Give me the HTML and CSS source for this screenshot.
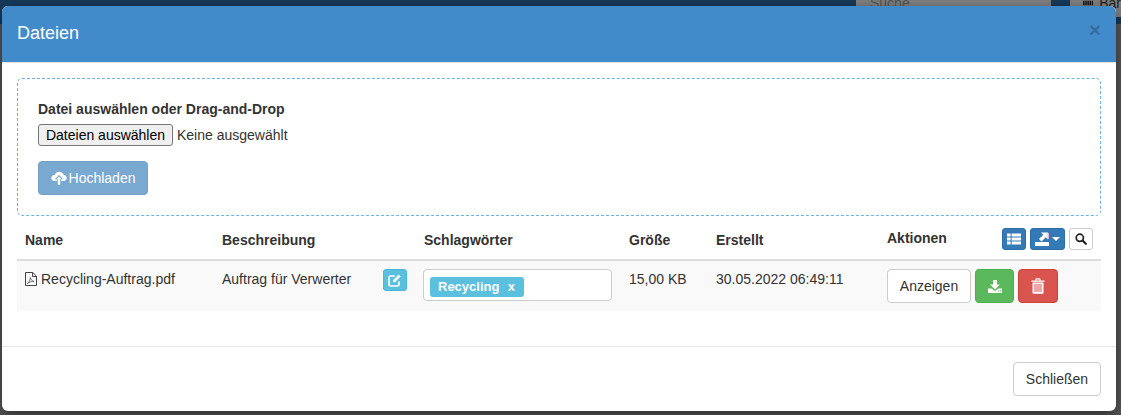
FILE: index.html
```html
<!DOCTYPE html>
<html lang="de">
<head>
<meta charset="utf-8">
<title>Dateien</title>
<link rel="stylesheet" href="styles.css">
</head>
<body>
<div class="backdrop-nav">
  <div class="nav-search">Suche...</div>
  <div class="nav-button">
    <svg class="nav-bars" viewBox="0 0 14 6" width="14" height="6"><path fill="#111" d="M0 0h2v6H0zM3 0h2v6H3zM6 0h2v6H6zM9 0h2v6H9zM12 0h2v6h-2z"/></svg><span class="nav-label">Bar</span>
  </div>
</div>
<div class="modal">
  <header class="modal-header">
    <h4 class="modal-title">Dateien</h4>
    <span class="close">×</span>
  </header>
  <main class="modal-body">
    <section class="dropzone">
      <div class="drop-label">Datei auswählen oder Drag-and-Drop</div>
      <div class="file-line">
        <button class="file-button" type="button">Dateien auswählen</button>
        <span class="file-name">Keine ausgewählt</span>
      </div>
      <button class="btn btn-upload" type="button">
        <svg class="icon-cloud" viewBox="0 0 16 14" width="16" height="14"><path fill="#fff" d="M8 0.800c-2 0-3.500 1.300-3.900 3C2.300 3.800 0.300 5 0.300 7c0 1.700 1.300 3 3.200 3h2.300V8.300H3.700L8 3.900l4.300 4.400h-2.100V10h2.300c1.900 0 3.200-1.300 3.200-3 0-1.700-1.300-2.800-2.900-2.900C12.300 2.200 10.300 0.800 8 0.800z"/><path fill="#fff" d="M6.800 8.300v5.400h2.400V8.300h1.300L8 5.500 5.500 8.300z"/></svg>Hochladen
      </button>
    </section>
    <table class="files">
      <colgroup>
        <col class="col-name"><col class="col-desc"><col class="col-tags"><col class="col-size"><col class="col-date"><col class="col-actions">
      </colgroup>
      <thead>
        <tr>
          <th>Name</th>
          <th>Beschreibung</th>
          <th>Schlagwörter</th>
          <th>Größe</th>
          <th>Erstellt</th>
          <th>
            <div class="actions-head">
              <span class="actions-title">Aktionen</span>
              <div class="tools">
                <button class="btn-xs btn-blue w24" type="button" aria-label="Liste">
                  <svg viewBox="0 0 14 12" width="14" height="12"><path fill="#fff" d="M0 0.500h3.600v3H0zM4.600 0.500H14v3H4.600zM0 4.500h3.600v3H0zM4.600 4.500H14v3H4.600zM0 8.500h3.600v3H0zM4.600 8.500H14v3H4.600z"/></svg>
                </button>
                <button class="btn-xs btn-blue w35" type="button" aria-label="Export">
                  <svg viewBox="0 0 15 14" width="15" height="14"><path fill="#fff" d="M0 10h14v4H0z"/><path fill="#fff" d="M6 0.500h7v7l-2.200-2.200L6.500 9.500 4 7l4.300-4.300z"/><path fill="#e9b7d8" d="M12.500 1h1.500v6h-1.500z"/></svg><span class="caret"></span>
                </button>
                <button class="btn-xs btn-white w24" type="button" aria-label="Suche">
                  <svg viewBox="0 0 12 12" width="12" height="12"><circle cx="4.800" cy="4.800" r="3.600" fill="none" stroke="#222" stroke-width="1.700"/><path stroke="#222" stroke-width="2.200" stroke-linecap="round" d="M7.800 7.800l3 3"/></svg>
                </button>
              </div>
            </div>
          </th>
        </tr>
      </thead>
      <tbody>
        <tr>
          <td class="name-cell">
            <svg class="icon-pdf" viewBox="0 0 12 14" width="12" height="14"><path fill="none" stroke="#444" d="M0.500 0.500h7.300l3.700 3.700v9.300H0.500z"/><path fill="none" stroke="#444" d="M7.500 0.800v3.700h3.700"/><path fill="none" stroke="#555" stroke-width="0.800" d="M2.300 11.500c1.700-1 2.800-3.400 3.100-6 .4 2.200 1.500 3.500 3.600 3.900-2.400-.2-4.700.6-6.700 2.100z"/></svg>Recycling-Auftrag.pdf
          </td>
          <td>
            <div class="desc-cell">
              <span>Auftrag für Verwerter</span>
              <button class="btn-xs btn-info w24" type="button" aria-label="Bearbeiten">
                <svg viewBox="0 0 14 14" width="14" height="14"><path fill="none" stroke="#fff" stroke-width="1.700" d="M11 8.500v2.700a1.800 1.800 0 0 1-1.800 1.800H2.800A1.800 1.800 0 0 1 1 11.200V4.800A1.800 1.800 0 0 1 2.800 3h4"/><path fill="#fff" d="M5 7.200L10.700 1.500l2 2L7 9.200H5z"/></svg>
              </button>
            </div>
          </td>
          <td>
            <div class="tags-input"><span class="tag">Recycling<span class="tag-x">x</span></span></div>
          </td>
          <td>15,00 KB</td>
          <td>30.05.2022 06:49:11</td>
          <td>
            <div class="row-actions">
              <button class="btn btn-default" type="button">Anzeigen</button>
              <button class="btn btn-success" type="button" aria-label="Herunterladen">
                <svg viewBox="0 0 14 13" width="14" height="13"><path fill="#fff" d="M5 0h4v4.500h3L7 9.500 2 4.500h3z"/><path fill="#fff" fill-rule="evenodd" d="M0 8.500h3.500L7 11l3.500-2.500H14V13H0zM10 10.500v1h1v-1zM12 10.500v1h1v-1z"/></svg>
              </button>
              <button class="btn btn-danger" type="button" aria-label="Löschen">
                <svg viewBox="0 0 14 16" width="14" height="16"><path fill="#fff" d="M0.500 2.500H4.500V1.300C4.500.6 5 .3 5.500.3h3c.6 0 1 .4 1 1v1.200h4v1.200H.5zM5.600 1.400v1.100h2.800V1.400z"/><path fill="#fff" fill-rule="evenodd" d="M1.500 4.500h11v10c0 .8-.5 1.300-1.200 1.300H2.700c-.7 0-1.200-.5-1.200-1.300zM3.500 6v8h1V6zM5.500 6v8h1V6zM7.500 6v8h1V6zM9.500 6v8h1V6z"/></svg>
              </button>
            </div>
          </td>
        </tr>
      </tbody>
    </table>
  </main>
  <footer class="modal-footer">
    <button class="btn btn-default" type="button">Schließen</button>
  </footer>
</div>
</body>
</html>
```
FILE: styles.css
```css
* { box-sizing: border-box; }
html, body { height: 100%; }
body {
  margin: 0;
  padding: 6px 5px 4px 2px;
  background: #585858;
  overflow: hidden;
  font-family: "Liberation Sans", Arial, sans-serif;
  font-size: 14px;
  line-height: 20px;
  color: #333;
}
.backdrop-nav {
  position: absolute;
  left: 0; top: 0; right: 0;
  height: 24px;
  background: #17395a;
  color: #555;
}
.nav-search {
  position: absolute;
  left: 856px; top: 0;
  width: 195px; height: 16px;
  padding: 0 14px;
  background: #808080;
  line-height: 6px;
  overflow: hidden;
}
.nav-button {
  position: absolute;
  display: flex;
  align-items: flex-start;
  gap: 6px;
  left: 1070px; top: 0; right: 0;
  height: 17px;
  padding-left: 13px;
  background: #808080;
  color: #222;
  overflow: hidden;
}
.nav-label { line-height: 6px; }
.modal {
  position: relative;
  display: flex;
  flex-direction: column;
  height: 405px;
  background: #fff;
  border-radius: 6px;
  box-shadow: 0 5px 15px rgba(0,0,0,.5);
  overflow: hidden;
}
.modal-header {
  display: flex;
  justify-content: space-between;
  align-items: flex-start;
  height: 57px;
  padding: 15px;
  background: #428bca;
  border-bottom: 1px solid #e5e5e5;
}
.modal-title {
  margin: 0;
  font-size: 18px;
  font-weight: 400;
  line-height: 25px;
  color: #fff;
}
.close {
  margin: -1px 0 0;
  font-size: 21px;
  font-weight: 700;
  line-height: 20px;
  color: #000;
  opacity: .2;
}
.modal-body {
  flex: none;
  height: 284px;
  padding: 15px;
  border-bottom: 1px solid #e5e5e5;
}
.dropzone {
  height: 138px;
  padding: 20px;
  border: 1px dashed #6fb1de;
  border-radius: 5px;
}
.drop-label { font-weight: 700; line-height: 20px; }
.file-line {
  display: flex;
  align-items: center;
  gap: 4px;
  margin-top: 5px;
  height: 22px;
}
.file-button {
  width: 135px;
  height: 22px;
  padding: 0;
  font: 14px "Liberation Sans", Arial, sans-serif;
  color: #000;
  background: #efefef;
  border: 1px solid #767676;
  border-radius: 3px;
}
.file-name { font-size: 14px; color: #333; }
.btn {
  display: inline-flex;
  align-items: center;
  justify-content: center;
  height: 34px;
  padding: 6px 12px;
  font: 14px/20px "Liberation Sans", Arial, sans-serif;
  border: 1px solid transparent;
  border-radius: 4px;
}
.btn-upload {
  margin-top: 15px;
  width: 110px;
  padding: 0;
  color: #fff;
  background: #337ab7;
  border-color: #2e6da4;
  opacity: .65;
}
.icon-cloud { margin-right: 2px; }
.btn-default { color: #333; background: #fff; border-color: #ccc; }
.btn-success { width: 39px; padding: 0; background: #5cb85c; border-color: #4cae4c; }
.btn-danger { width: 40px; padding: 0; background: #d9534f; border-color: #d43f3a; }
.files {
  width: 100%;
  border-collapse: separate;
  border-spacing: 0;
  table-layout: fixed;
}
.col-name { width: 197px; }
.col-desc { width: 202px; }
.col-tags { width: 205px; }
.col-size { width: 87px; }
.col-date { width: 171px; }
.col-actions { width: 222px; }
.files th {
  height: 45px;
  padding: 8px 8px 9px;
  text-align: left;
  vertical-align: bottom;
  font-weight: 700;
  border-bottom: 2px solid #ddd;
}
.files td {
  height: 50px;
  padding: 8px;
  vertical-align: top;
  background: #f9f9f9;
}
.files td:nth-child(3) { padding-left: 7px; }
.actions-head {
  display: flex;
  align-items: flex-start;
  justify-content: space-between;
}
.actions-title { line-height: 20px; }
.tools { display: flex; gap: 4px; margin-right: 0; }
.btn-xs {
  display: inline-flex;
  align-items: center;
  justify-content: center;
  height: 22px;
  padding: 0;
  border: 1px solid transparent;
  border-radius: 3px;
}
.w24 { width: 24px; }
.w35 { width: 35px; }
.btn-blue { background: #337ab7; border-color: #2e6da4; }
.btn-white { background: #fff; border-color: #ccc; }
.btn-info { background: #5bc0de; border-color: #46b8da; }
.caret {
  width: 0; height: 0;
  margin-left: 2px;
  border-top: 4px solid #fff;
  border-left: 4px solid transparent;
  border-right: 4px solid transparent;
}
.icon-pdf { margin-right: 4px; vertical-align: -2px; }
.desc-cell {
  display: flex;
  justify-content: space-between;
  align-items: flex-start;
  margin-right: 1px;
}
.tags-input {
  display: flex;
  align-items: center;
  height: 32px;
  width: 189px;
  padding: 4px 6px 0;
  background: #fff;
  border: 1px solid #ccc;
  border-radius: 4px;
}
.tag {
  display: inline-flex;
  justify-content: space-between;
  align-items: center;
  width: 94px;
  height: 20px;
  padding: 0 9px 0 8px;
  font-size: 13px;
  font-weight: 700;
  color: #fff;
  background: #5bc0de;
  border-radius: 3px;
}
.row-actions { display: flex; gap: 4px; }
.row-actions .btn-default { width: 84px; padding: 0; }
.modal-footer {
  display: flex;
  justify-content: flex-end;
  padding: 15px;
}
.modal-footer .btn { width: 88px; padding: 0; }
```
